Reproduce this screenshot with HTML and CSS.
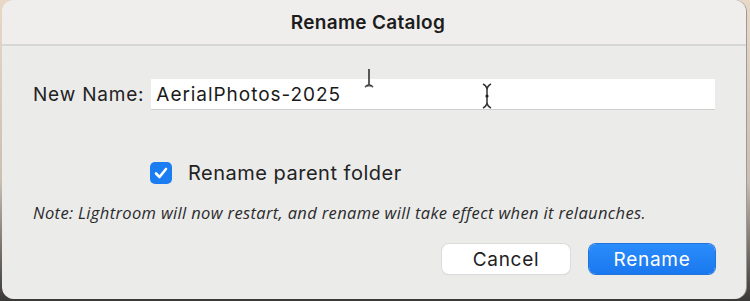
FILE: index.html
```html
<!DOCTYPE html>
<html lang="en">
<head>
<meta charset="utf-8">
<title>Rename Catalog</title>
<link rel="stylesheet" href="styles.css">
</head>
<body>
<div class="dialog">
  <div class="titlebar">Rename Catalog</div>
  <div class="content">
    <div class="name-row">
      <label class="name-label" for="name">New Name:</label>
      <div class="field">
        <span class="field-text">AerialPhotos-2025</span>
        <svg class="cursor cursor-a" width="12" height="22" viewBox="0 0 12 22">
          <path d="M6 1 V17 M2 19 Q6 15 10 19" fill="none" stroke="#333" stroke-width="1.6"/>
          <path d="M2 19 Q6 17 10 19" fill="none" stroke="#777" stroke-width="1"/>
        </svg>
        <svg class="cursor cursor-b" width="12" height="28" viewBox="0 0 12 28">
          <path d="M2 2 Q6 4 6 8 V20 Q6 24 2 26 M10 2 Q6 4 6 8 M6 20 Q6 24 10 26" fill="none" stroke="#333" stroke-width="1.5"/>
          <circle cx="6" cy="14" r="1.6" fill="#222"/>
        </svg>
      </div>
    </div>
    <div class="check-row">
      <span class="checkbox">
        <svg width="22" height="22" viewBox="0 0 22 22"><path d="M6 11.5 L9.5 15 L16 7" fill="none" stroke="#fff" stroke-width="2.6" stroke-linecap="round" stroke-linejoin="round"/></svg>
      </span>
      <span class="check-label">Rename parent folder</span>
    </div>
    <p class="note">Note: Lightroom will now restart, and rename will take effect when it relaunches.</p>
    <div class="buttons">
      <button class="btn btn-cancel">Cancel</button>
      <button class="btn btn-primary">Rename</button>
    </div>
  </div>
</div>
</body>
</html>
```
FILE: styles.css
```css
html, body {
  margin: 0;
  padding: 0;
}
body {
  width: 750px;
  height: 301px;
  overflow: hidden;
  background: linear-gradient(to bottom, #e8d8c6 0%, #cbbfb3 60%, #3a3836 100%);
  font-family: "Inter", "Liberation Sans", sans-serif;
  color: #1e1e1e;
}
.dialog {
  box-sizing: border-box;
  margin-left: 2px;
  width: 744px;
  height: 299px;
  background: #ebebea;
  border-radius: 12px;
  overflow: hidden;
  display: flex;
  flex-direction: column;
  box-shadow: 1px 0 0 #9a9a9a;
}
.titlebar {
  height: 43px;
  flex: none;
  background: #efeeed;
  border-bottom: 2px solid #d6d6d5;
  display: flex;
  align-items: center;
  justify-content: center;
  font-size: 19px;
  font-weight: 600;
  color: #1c1c1c;
  padding: 1px 12px 0 0;
  letter-spacing: 0.3px;
}
.content {
  flex: 1;
  padding: 33px 31px 0 31px;
  display: flex;
  flex-direction: column;
}
.name-row {
  display: flex;
  align-items: center;
  gap: 7px;
}
.name-label {
  font-size: 19px;
  letter-spacing: 0.8px;
  color: #222;
}
.field {
  position: relative;
  flex: 1;
  height: 30px;
  background: #fff;
  border-bottom: 1px solid #cfcfcf;
  display: flex;
  align-items: center;
  padding-left: 5px;
}
.field-text {
  font-size: 19px;
  letter-spacing: 0.95px;
  color: #1a1a1a;
}
.cursor {
  position: absolute;
}
.cursor-a {
  left: 212px;
  top: -11px;
}
.cursor-b {
  left: 330px;
  top: 3px;
}
.check-row {
  display: flex;
  align-items: center;
  gap: 16px;
  margin-top: 51px;
  margin-left: 117px;
}
.checkbox {
  width: 22px;
  height: 22px;
  border-radius: 5px;
  background: #1c7cf2;
  display: flex;
}
.check-label {
  font-size: 20px;
  letter-spacing: 0.5px;
  color: #222;
}
.note {
  margin: 16px 0 0 0;
  font-family: "Open Sans", "Liberation Sans", sans-serif;
  font-style: italic;
  font-size: 16.5px;
  color: #2a2a2a;
  letter-spacing: 0.35px;
}
.buttons {
  display: flex;
  justify-content: flex-end;
  gap: 19px;
  margin-top: 20px;
}
.btn {
  width: 128px;
  height: 30px;
  border-radius: 7px;
  border: none;
  font-family: "Inter", "Liberation Sans", sans-serif;
  font-size: 19px;
  letter-spacing: 0.7px;
  padding: 0;
}
.btn-cancel {
  background: #fff;
  color: #222;
  box-shadow: 0 0 0 1px #dcdcdc, 0 1px 1px rgba(0,0,0,0.15);
}
.btn-primary {
  width: 126px;
  background: linear-gradient(#2a8dfb, #1a78ef);
  color: #fff;
  box-shadow: 0 0 0 1px #2373dd;
}
```
